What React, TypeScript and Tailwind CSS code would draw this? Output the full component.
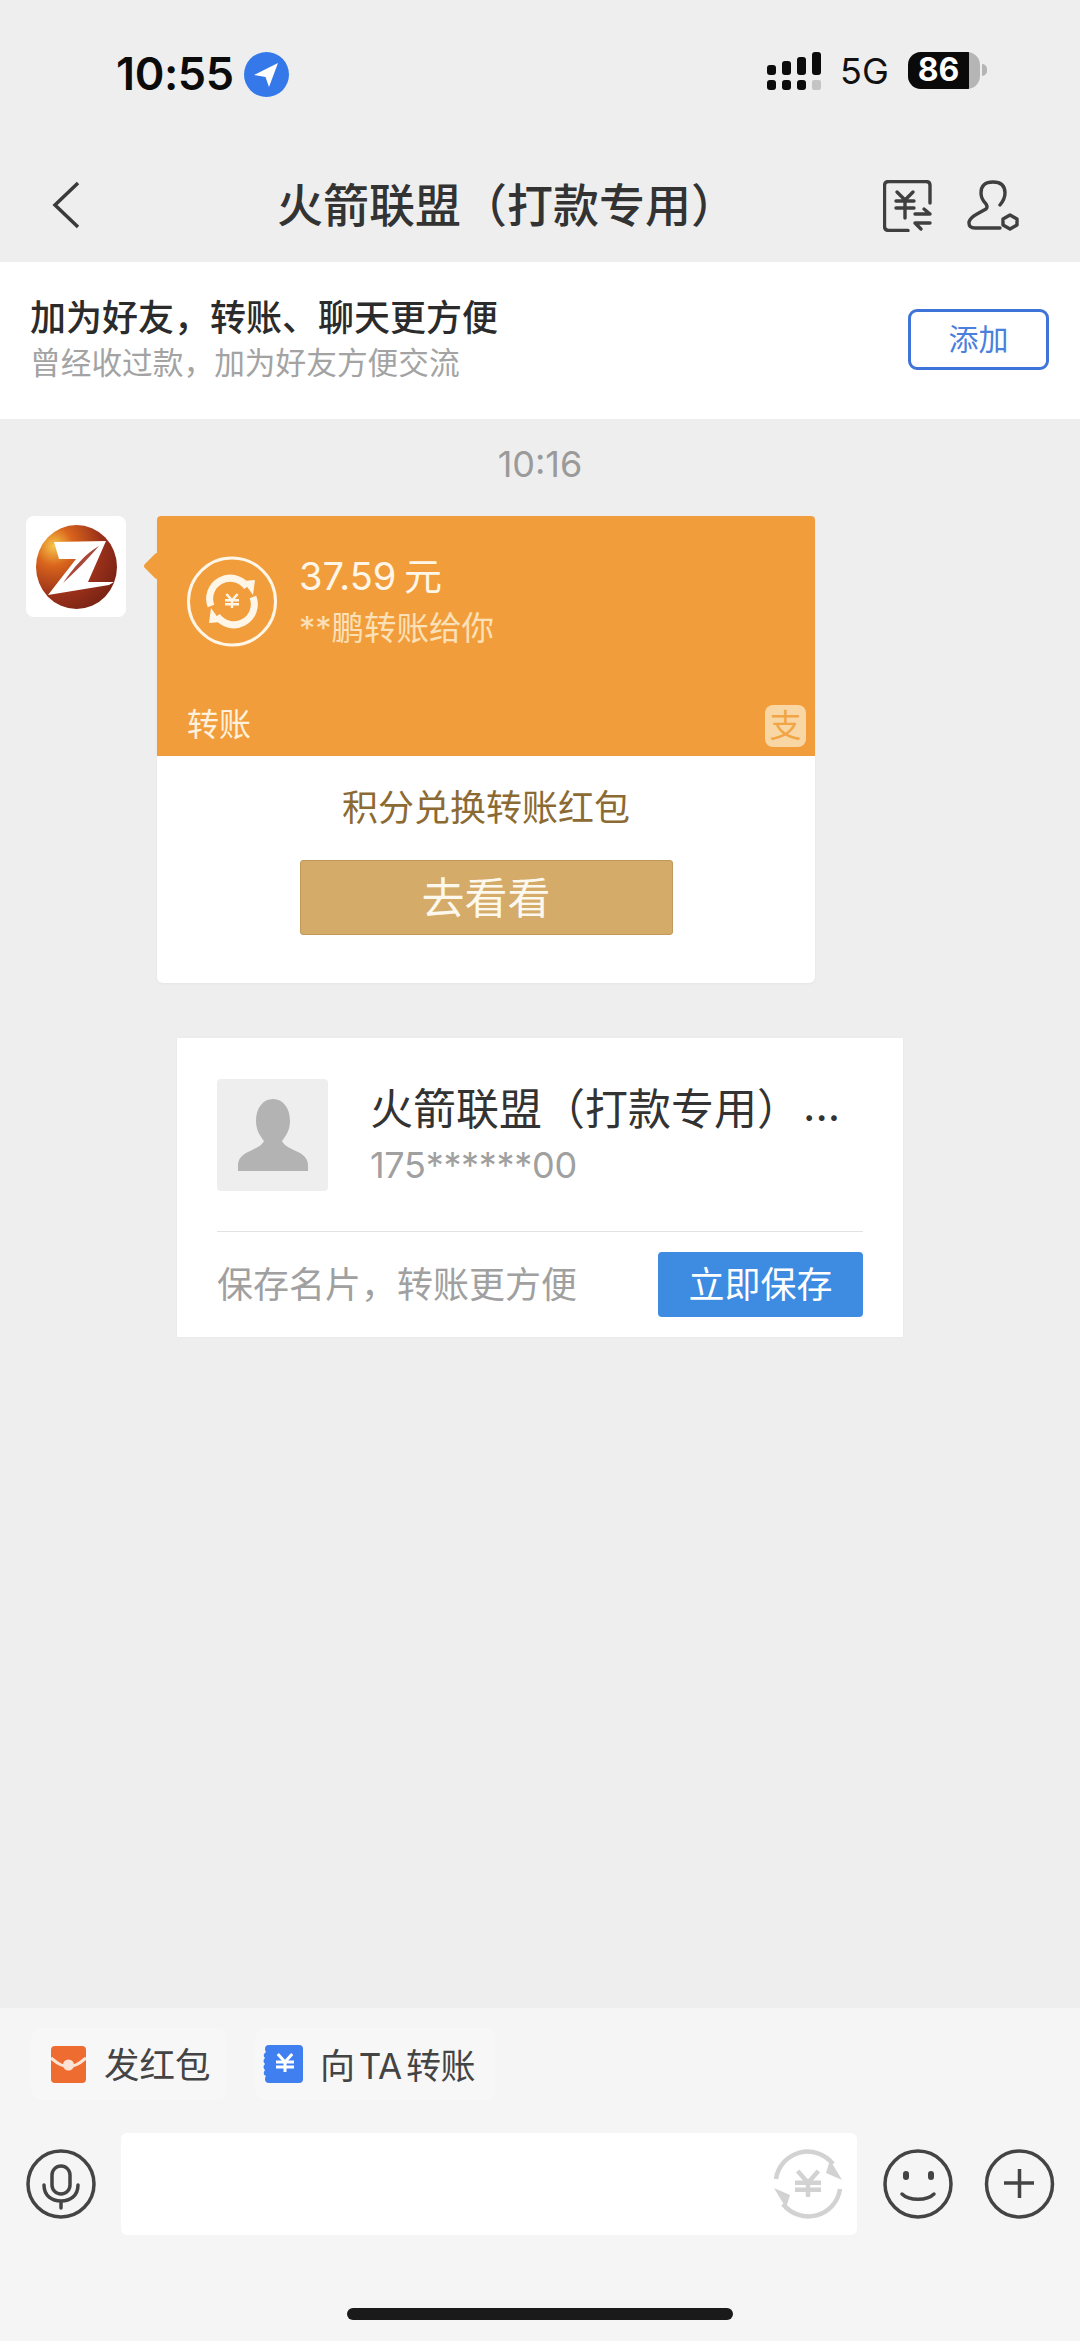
const Yen = ({ x, y, s, color, w }: { x: number; y: number; s: number; color: string; w: number }) => (
  <g fill="none" stroke={color} strokeWidth={w}>
    <path d={`M${x - s * 0.8} ${y - s} L${x} ${y - s * 0.1} L${x + s * 0.8} ${y - s}`} />
    <path d={`M${x - s} ${y - s * 0.1} H${x + s} M${x - s} ${y + s * 0.45} H${x + s} M${x} ${y - s * 0.1} V${y + s}`} />
  </g>
);

function StatusBar() {
  return (
    <div className="h-[148px] flex justify-between items-start pt-[51px] pl-[116px] pr-[93px]">
      <div className="flex items-center gap-[10px] h-[46px]">
        <span className="text-[45px] leading-[46px] font-semibold text-[#0b0b0b] tracking-[-0.4px]">10:55</span>
        <svg width="45" height="45" viewBox="0 0 45 45">
          <circle cx="22.5" cy="22.5" r="22.5" fill="#3478ea" />
          <path d="M10 23 L34 11 L25 35 L21.5 25 Z" fill="#fff" />
        </svg>
      </div>
      <div className="flex items-center h-[40px]">
        <svg width="56" height="40" viewBox="0 0 56 40" className="mr-[18px]">
          <g fill="#0b0b0b">
            <rect x="1" y="14" width="9" height="10" rx="3" />
            <rect x="16" y="10" width="9" height="14" rx="3" />
            <rect x="31" y="6" width="9" height="18" rx="3" />
            <rect x="46" y="1" width="9" height="23" rx="3" />
            <rect x="1" y="29" width="9" height="10" rx="3" />
            <rect x="16" y="29" width="9" height="10" rx="3" />
            <rect x="31" y="29" width="9" height="10" rx="3" />
          </g>
          <rect x="46" y="29" width="9" height="10" rx="2" fill="#c4c4c4" />
        </svg>
        <span className="text-[36px] leading-[40px] font-normal text-[#111] w-[68px]">5G</span>
        <div className="relative w-[72px] h-[37px] rounded-[13px] overflow-hidden bg-[#b5b5b5] mt-[-2px]">
          <div className="w-[61px] h-full bg-[#0a0a0a] flex items-center justify-center text-white text-[32px] leading-none font-bold">
            86
          </div>
        </div>
        <div className="w-[5px] h-[12px] rounded-r-full bg-[#b5b5b5] ml-[2px] mt-[-2px]" />
      </div>
    </div>
  );
}

function Header() {
  return (
    <div className="h-[114px] relative flex items-center justify-center pr-[66px]">
      <svg width="30" height="48" viewBox="0 0 30 48" className="absolute left-[51px] top-[33px]">
        <path d="M27 2 L4 24 L27 46" fill="none" stroke="#3a3a3a" strokeWidth="3.5" />
      </svg>
      <h1 className="text-[46px] leading-[60px] font-medium text-[#333]">火箭联盟（打款专用）</h1>
      <div className="absolute left-[883px] top-[32px] flex gap-[34px]">
        <svg width="50" height="52" viewBox="0 0 50 52">
          <g fill="none" stroke="#3f3f3f" strokeWidth="3.4" strokeLinecap="round" strokeLinejoin="round">
            <path d="M47 23 V5 Q47 1.5 43 1.5 H6 Q1.5 1.5 1.5 6 V46 Q1.5 50.5 6 50.5 H25" />
            <path d="M14 12 L22 20 L30 12 M13 21 H31 M13 28 H31 M22 20 V38" />
            <path d="M32 34 H47 L41 29 M47 43 H32 L38 49" />
          </g>
        </svg>
        <svg width="52" height="52" viewBox="0 0 52 52">
          <g fill="none" stroke="#3f3f3f" strokeWidth="3.4" strokeLinecap="round" strokeLinejoin="round">
            <path d="M33 48 H8 Q1.5 48 2 42 Q3 38 10 34 L19 29 Q21 27 19 24 Q14 19 14 13 Q14 2 26 2 Q38 2 38 13 Q38 19 33 25" />
            <path d="M43 35 L50 39 V45 L43 49 L36 45 V39 Z" />
          </g>
        </svg>
      </div>
    </div>
  );
}

function FriendBanner() {
  return (
    <div className="h-[157px] bg-white flex items-center justify-between pl-[30px] pr-[31px]">
      <div className="flex flex-col mb-[6px]">
        <div className="text-[36px] leading-[50px] font-medium text-[#2b2b2b]">加为好友，转账、聊天更方便</div>
        <div className="text-[30.7px] leading-[40px] text-[#a3a3a3]">曾经收过款，加为好友方便交流</div>
      </div>
      <button className="w-[141px] h-[61px] mb-[3px] rounded-[9px] border-[3px] border-[#3f74d8] text-[#4a80dc] text-[30px] leading-none">
        添加
      </button>
    </div>
  );
}

function ZLogo() {
  return (
    <div className="w-[100px] h-[101px] rounded-[8px] bg-white flex items-center justify-center shrink-0">
      <svg width="81" height="84" viewBox="0 0 81 84">
        <defs>
          <radialGradient id="zg" cx="0.22" cy="0.25" r="0.85">
            <stop offset="0" stopColor="#f6c54a" />
            <stop offset="0.28" stopColor="#d9641c" />
            <stop offset="0.7" stopColor="#98301a" />
            <stop offset="1" stopColor="#7c2415" />
          </radialGradient>
        </defs>
        <ellipse cx="40.5" cy="42" rx="40.5" ry="42" fill="url(#zg)" />
        <path d="M18 17 L70 16 L52 57 L78 57 L73 60 L12 70 L40 34 L23 34 Z" fill="#fff" />
        <path d="M63 21 C50 28 38 42 27 58 C40 46 52 34 63 21 Z" fill="#a8483a" />
      </svg>
    </div>
  );
}

function TransferCard() {
  return (
    <div className="relative w-[658px] rounded-[6px] bg-white shadow-[0_1px_3px_rgba(0,0,0,0.04)]">
      <div className="absolute left-[-10px] top-[40px] w-[20px] h-[20px] rotate-45 rounded-[3px] bg-[#f29d3b]" />
      <div className="relative h-[240px] bg-[#f29d3b] rounded-t-[4px] flex flex-col justify-between">
        <div className="flex pt-[40px] pl-[30px]">
          <svg width="90" height="91" viewBox="0 0 90 91">
            <circle cx="45" cy="45.5" r="43.5" fill="none" stroke="#fff6e8" strokeWidth="3" />
            <g fill="none" stroke="#fff6e8" strokeWidth="7">
              <path d="M24 50 A20.5 20.5 0 0 1 60 31" />
              <path d="M66 41 A20.5 20.5 0 0 1 30 60" />
            </g>
            <path d="M56 25 L68 24 L66 39 Z M34 66 L22 67 L24 52 Z" fill="#fff6e8" />
            <Yen x={45} y={45} s={7} color="#fff6e8" w={2.5} />
          </svg>
          <div className="ml-[22px] flex flex-col">
            <div className="text-[38px] leading-[46px] mt-[-3px] font-normal text-[#fff6e8] [word-spacing:-3px]">37.59 元</div>
            <div className="text-[32.5px] leading-[44px] mt-[8px] text-[#fbe0b8]">**鹏转账给你</div>
          </div>
        </div>
        <div className="flex justify-between items-end pl-[30px] pr-[9px] pb-[9px]">
          <span className="text-[32px] leading-[44px] text-[#fff1dc]">转账</span>
          <div className="w-[41px] h-[42px] rounded-[8px] bg-[#f8d7a5] flex items-center justify-center text-[32px] leading-none text-[#f2a544]">
            支
          </div>
        </div>
      </div>
      <div className="h-[227px] flex flex-col items-center pt-[32px]">
        <div className="text-[36px] leading-[40px] text-[#8c6a33]">积分兑换转账红包</div>
        <button className="mt-[32px] w-[373px] h-[75px] rounded-[3px] bg-[#d4ab68] border border-[#c09a58] text-[43px] leading-none pt-[2px] text-[#fdf8ee]">
          去看看
        </button>
      </div>
    </div>
  );
}

function ContactCard() {
  return (
    <div className="ml-[177px] mt-[55px] w-[726px] h-[299px] bg-white px-[40px] pt-[41px] shadow-[0_0_3px_rgba(0,0,0,0.04)]">
      <div className="flex pb-[40px] border-b border-[#e2e2e2]">
        <div className="w-[111px] h-[112px] rounded-[4px] bg-[#eeeeee] flex items-center justify-center shrink-0">
          <svg width="70" height="72" viewBox="0 0 70 72">
            <path d="M35 0 C45 0 52 9 52 22 C52 32 47 38 44 42 C46 47 54 50 62 54 C67 57 70 61 70 66 V72 H0 V66 C0 61 3 57 8 54 C16 50 24 47 26 42 C23 38 18 32 18 22 C18 9 25 0 35 0 Z" fill="#b3b3b3" />
          </svg>
        </div>
        <div className="ml-[42px] flex flex-col pt-[8px]">
          <div className="text-[43px] leading-[44px] text-[#333] whitespace-nowrap">
            火箭联盟（打款专用）<span className="ml-[3px] relative top-[-4px]">...</span>
          </div>
          <div className="text-[36px] leading-[44px] mt-[12px] font-normal text-[#a0a0a0] tracking-[-0.3px]">175******00</div>
        </div>
      </div>
      <div className="flex items-center justify-between mt-[20px]">
        <span className="text-[36px] leading-[44px] text-[#a0a0a0]">保存名片，转账更方便</span>
        <button className="w-[205px] h-[65px] rounded-[4px] bg-[#3e8be2] text-[36px] leading-none text-white">
          立即保存
        </button>
      </div>
    </div>
  );
}

function BottomBar() {
  return (
    <div className="h-[333px] bg-[#f5f5f5] flex flex-col relative">
      <div className="flex gap-[28px] pl-[31px] pt-[20px]">
        <div className="h-[72px] w-[196px] rounded-[10px] bg-[#f7f7f7] flex items-center pl-[20px] gap-[18px]">
          <svg width="35" height="37" viewBox="0 0 35 37">
            <rect width="35" height="37" rx="4" fill="#ee6c2f" />
            <path d="M0 12 C8 19 12 20 17.5 21 C23 20 27 19 35 12" fill="none" stroke="#fbe4d6" strokeWidth="3" />
            <circle cx="17.5" cy="19" r="5.5" fill="#fbe4d6" />
          </svg>
          <span className="text-[35.5px] leading-[44px] pt-[3px] text-[#444]">发红包</span>
        </div>
        <div className="h-[72px] w-[240px] rounded-[10px] bg-[#f7f7f7] flex items-center pl-[7px] gap-[17px]">
          <svg width="41" height="38" viewBox="0 0 41 38">
            <path d="M7 0 H37 Q41 0 41 4 V34 Q41 38 37 38 H7 Q3 38 3 34 Q3 32 4 31 Q0 29 3 25 Q0 22 3 19 Q0 16 3 13 Q0 10 4 7 Q3 6 3 4 Q3 0 7 0 Z" fill="#3f7ff0" />
            <Yen x={23} y={18} s={9} color="#fff" w={3} />
          </svg>
          <span className="text-[35px] leading-[44px] pt-[3px] text-[#444] tracking-[-0.5px] [word-spacing:-5px]">向 TA 转账</span>
        </div>
      </div>
      <div className="flex items-center mt-[33px] pl-[26px] pr-[25px]">
        <svg width="70" height="70" viewBox="0 0 70 70" className="shrink-0">
          <g fill="none" stroke="#444" strokeWidth="3.5" strokeLinecap="round">
            <circle cx="35" cy="35" r="33" />
            <rect x="26" y="17" width="18" height="28" rx="9" />
            <path d="M18 36 C18 47 26 52 35 52 C44 52 52 47 52 36 M35 52 V59" />
          </g>
        </svg>
        <div className="w-[736px] h-[102px] ml-[25px] rounded-[6px] bg-white flex items-center justify-end pr-[14px] shrink-0">
          <svg width="70" height="70" viewBox="0 0 70 70">
            <g fill="none" stroke="#d2d2d2" strokeWidth="4.5">
              <path d="M3 30 A32 32 0 0 1 60 15" />
              <path d="M67 40 A32 32 0 0 1 10 55" />
            </g>
            <path d="M57 11 L69 31 L53 24 Z M13 59 L1 39 L17 46 Z" fill="#d2d2d2" />
            <Yen x={35} y={35} s={13} color="#d2d2d2" w={4.5} />
          </svg>
        </div>
        <svg width="70" height="70" viewBox="0 0 70 70" className="ml-[26px] shrink-0">
          <g fill="none" stroke="#444" strokeWidth="3.5" strokeLinecap="round">
            <circle cx="35" cy="35" r="33" />
            <path d="M19 45 C26 52 44 52 51 45" />
          </g>
          <rect x="20" y="22" width="6" height="9" rx="3" fill="#444" />
          <rect x="45" y="22" width="6" height="9" rx="3" fill="#444" />
        </svg>
        <svg width="71" height="70" viewBox="0 0 71 70" className="ml-[31px] shrink-0">
          <g fill="none" stroke="#444" strokeWidth="3.5">
            <circle cx="35.5" cy="35" r="33" />
            <path d="M20 34 H50 M35.5 20 V49" />
          </g>
        </svg>
      </div>
      <div className="absolute left-[347px] top-[300px] w-[386px] h-[12px] rounded-full bg-[#1a1a1a]" />
    </div>
  );
}

export default function App() {
  return (
    <div
      lang="zh-CN"
      className="w-[1080px] h-[2341px] flex flex-col bg-[#eeeeee] overflow-hidden font-['Inter','Noto_Sans_CJK_SC',sans-serif]"
    >
      <StatusBar />
      <Header />
      <FriendBanner />
      <div className="h-[97px] flex items-center justify-center pb-[8px] text-[36px] leading-none text-[#9a9a9a]">10:16</div>
      <div className="flex pl-[26px] gap-[31px]">
        <ZLogo />
        <TransferCard />
      </div>
      <ContactCard />
      <div className="flex-1" />
      <BottomBar />
    </div>
  );
}
